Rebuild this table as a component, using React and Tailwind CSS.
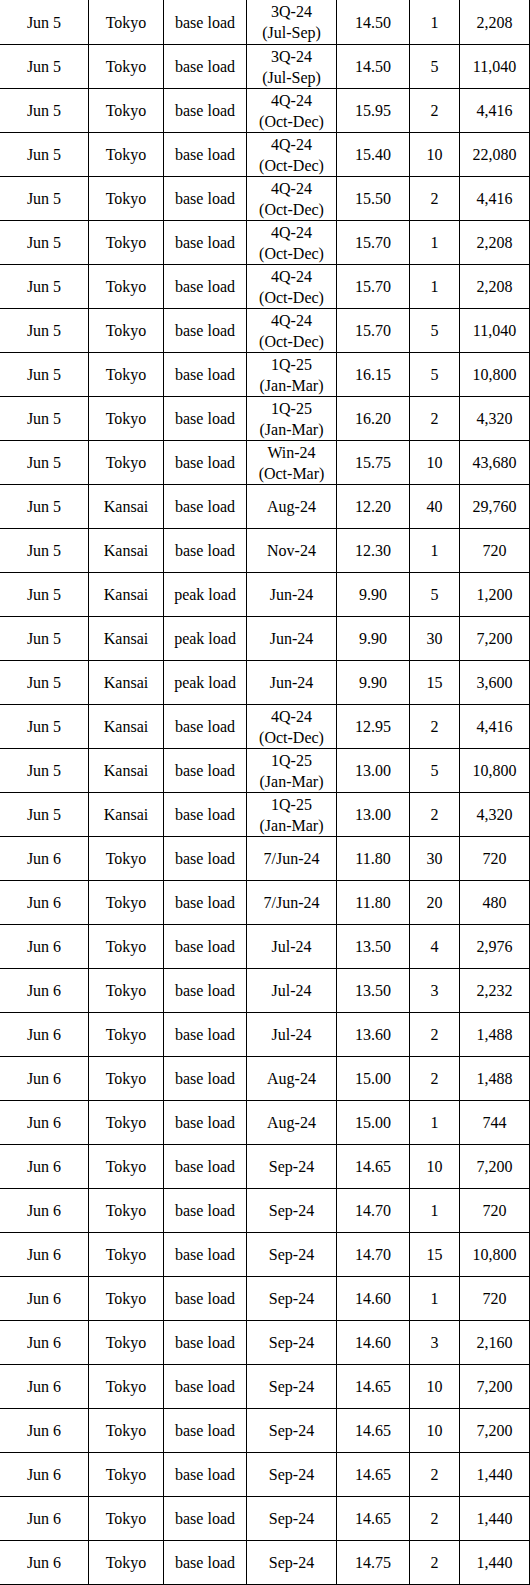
const rows = [
  ["Jun 5", "Tokyo", "base load", ["3Q-24", "(Jul-Sep)"], "14.50", "1", "2,208"],
  ["Jun 5", "Tokyo", "base load", ["3Q-24", "(Jul-Sep)"], "14.50", "5", "11,040"],
  ["Jun 5", "Tokyo", "base load", ["4Q-24", "(Oct-Dec)"], "15.95", "2", "4,416"],
  ["Jun 5", "Tokyo", "base load", ["4Q-24", "(Oct-Dec)"], "15.40", "10", "22,080"],
  ["Jun 5", "Tokyo", "base load", ["4Q-24", "(Oct-Dec)"], "15.50", "2", "4,416"],
  ["Jun 5", "Tokyo", "base load", ["4Q-24", "(Oct-Dec)"], "15.70", "1", "2,208"],
  ["Jun 5", "Tokyo", "base load", ["4Q-24", "(Oct-Dec)"], "15.70", "1", "2,208"],
  ["Jun 5", "Tokyo", "base load", ["4Q-24", "(Oct-Dec)"], "15.70", "5", "11,040"],
  ["Jun 5", "Tokyo", "base load", ["1Q-25", "(Jan-Mar)"], "16.15", "5", "10,800"],
  ["Jun 5", "Tokyo", "base load", ["1Q-25", "(Jan-Mar)"], "16.20", "2", "4,320"],
  ["Jun 5", "Tokyo", "base load", ["Win-24", "(Oct-Mar)"], "15.75", "10", "43,680"],
  ["Jun 5", "Kansai", "base load", ["Aug-24"], "12.20", "40", "29,760"],
  ["Jun 5", "Kansai", "base load", ["Nov-24"], "12.30", "1", "720"],
  ["Jun 5", "Kansai", "peak load", ["Jun-24"], "9.90", "5", "1,200"],
  ["Jun 5", "Kansai", "peak load", ["Jun-24"], "9.90", "30", "7,200"],
  ["Jun 5", "Kansai", "peak load", ["Jun-24"], "9.90", "15", "3,600"],
  ["Jun 5", "Kansai", "base load", ["4Q-24", "(Oct-Dec)"], "12.95", "2", "4,416"],
  ["Jun 5", "Kansai", "base load", ["1Q-25", "(Jan-Mar)"], "13.00", "5", "10,800"],
  ["Jun 5", "Kansai", "base load", ["1Q-25", "(Jan-Mar)"], "13.00", "2", "4,320"],
  ["Jun 6", "Tokyo", "base load", ["7/Jun-24"], "11.80", "30", "720"],
  ["Jun 6", "Tokyo", "base load", ["7/Jun-24"], "11.80", "20", "480"],
  ["Jun 6", "Tokyo", "base load", ["Jul-24"], "13.50", "4", "2,976"],
  ["Jun 6", "Tokyo", "base load", ["Jul-24"], "13.50", "3", "2,232"],
  ["Jun 6", "Tokyo", "base load", ["Jul-24"], "13.60", "2", "1,488"],
  ["Jun 6", "Tokyo", "base load", ["Aug-24"], "15.00", "2", "1,488"],
  ["Jun 6", "Tokyo", "base load", ["Aug-24"], "15.00", "1", "744"],
  ["Jun 6", "Tokyo", "base load", ["Sep-24"], "14.65", "10", "7,200"],
  ["Jun 6", "Tokyo", "base load", ["Sep-24"], "14.70", "1", "720"],
  ["Jun 6", "Tokyo", "base load", ["Sep-24"], "14.70", "15", "10,800"],
  ["Jun 6", "Tokyo", "base load", ["Sep-24"], "14.60", "1", "720"],
  ["Jun 6", "Tokyo", "base load", ["Sep-24"], "14.60", "3", "2,160"],
  ["Jun 6", "Tokyo", "base load", ["Sep-24"], "14.65", "10", "7,200"],
  ["Jun 6", "Tokyo", "base load", ["Sep-24"], "14.65", "10", "7,200"],
  ["Jun 6", "Tokyo", "base load", ["Sep-24"], "14.65", "2", "1,440"],
  ["Jun 6", "Tokyo", "base load", ["Sep-24"], "14.65", "2", "1,440"],
  ["Jun 6", "Tokyo", "base load", ["Sep-24"], "14.75", "2", "1,440"],
];

const cell = "flex flex-col items-center justify-center border-r border-black text-center";

export default function App() {
  return (
    <div
      className="w-[530px] bg-white text-black text-[16px] leading-[21px]"
      style={{ fontFamily: '"Liberation Serif", "Times New Roman", serif' }}
    >
      {rows.map((r, i) => (
        <div
          key={i}
          className={`grid grid-cols-[89px_75px_83px_90px_73px_50px_70px] border-b border-black ${
            i === 0 ? "h-[45px]" : "h-[44px]"
          }`}
        >
          <div className={cell}>{r[0]}</div>
          <div className={cell}>{r[1]}</div>
          <div className={cell}>{r[2]}</div>
          <div className={cell}>
            {r[3].map((t, j) => (
              <span key={j}>{t}</span>
            ))}
          </div>
          <div className={cell}>{r[4]}</div>
          <div className={cell}>{r[5]}</div>
          <div className={cell}>{r[6]}</div>
        </div>
      ))}
    </div>
  );
}
